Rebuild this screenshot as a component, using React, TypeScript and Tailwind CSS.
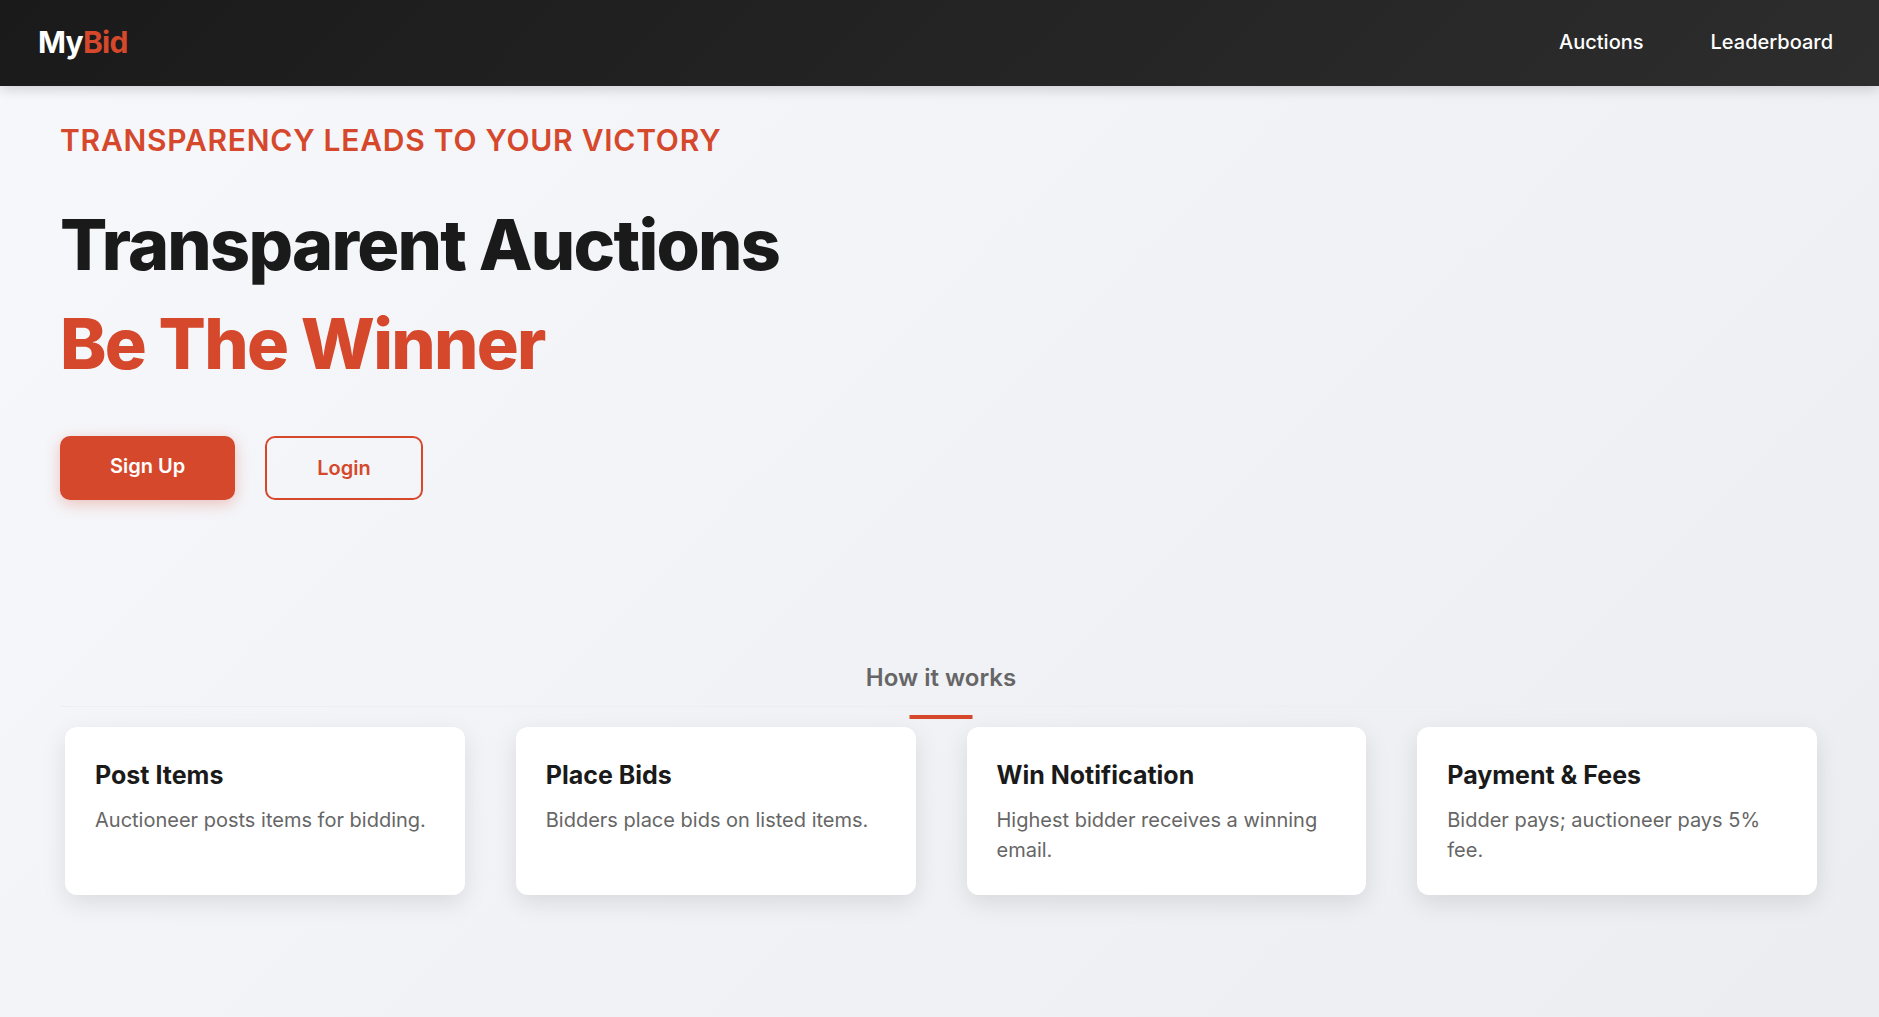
const steps = [
  { title: "Post Items", text: "Auctioneer posts items for bidding." },
  { title: "Place Bids", text: "Bidders place bids on listed items." },
  { title: "Win Notification", text: "Highest bidder receives a winning email." },
  { title: "Payment & Fees", text: "Bidder pays; auctioneer pays 5% fee." },
];

function Header() {
  return (
    <header className="relative flex h-[86px] items-center justify-between bg-linear-[135deg,#1a1a1a,#2d2d2d] pr-[46px] pb-[3px] pl-[38px] shadow-[0_4px_12px_rgba(0,0,0,0.15)]">
      <a href="#home" className="text-[30px] leading-9 font-bold tracking-tight text-white">
        My<span className="text-[#d6482b]">Bid</span>
      </a>
      <nav className="flex gap-[67px] text-xl leading-[30px] font-medium text-white">
        <a href="#auctions">Auctions</a>
        <a href="#leaderboard">Leaderboard</a>
      </nav>
    </header>
  );
}

function Hero() {
  return (
    <section>
      <p className="text-[30px] leading-[45px] font-semibold tracking-wide text-[#d6482b] uppercase">
        Transparency leads to your victory
      </p>
      <h1 className="mt-8 text-[70px] leading-[99px] font-extrabold tracking-tight text-[#1a1a1a]">
        Transparent Auctions
        <span className="block text-[#d6482b]">Be The Winner</span>
      </h1>
      <div className="mt-[43px] flex gap-[30px] text-xl leading-[30px] font-semibold">
        <button
          type="button"
          className="flex items-start rounded-[10px] bg-[#d6482b] px-[50px] py-[15px] text-white shadow-[0_4px_15px_rgba(214,72,43,0.3)]"
        >
          Sign Up
        </button>
        <button
          type="button"
          className="rounded-[10px] border-2 border-[#d6482b] px-[50px] py-[15px] text-[#d6482b]"
        >
          Login
        </button>
      </div>
    </section>
  );
}

function HowItWorks() {
  return (
    <section className="mt-40">
      <div className="relative border-b border-[#eeeeee] pb-[10px] text-center">
        <h2 className="text-2xl leading-9 font-semibold text-[#666666]">How it works</h2>
        <span className="absolute top-full left-1/2 mt-[9px] h-1 w-[63px] -translate-x-1/2 bg-[#d6482b]" />
      </div>
      <div className="mt-5 grid grid-cols-4 gap-[51px] px-[5px]">
        {steps.map((step) => (
          <article
            key={step.title}
            className="rounded-xl bg-white p-[30px] shadow-[0_8px_25px_rgba(0,0,0,0.1)]"
          >
            <h3 className="text-[25px] leading-9 font-bold text-[#1a1a1a]">{step.title}</h3>
            <p className="mt-3 text-xl leading-[30px] text-[#666666]">{step.text}</p>
          </article>
        ))}
      </div>
    </section>
  );
}

export default function App() {
  return (
    <div className="min-h-screen bg-linear-[135deg,#f7f8fc,#ebedf1] font-['Inter',sans-serif]">
      <Header />
      <main className="pt-8 pr-[57px] pl-[60px]">
        <Hero />
        <HowItWorks />
      </main>
    </div>
  );
}
